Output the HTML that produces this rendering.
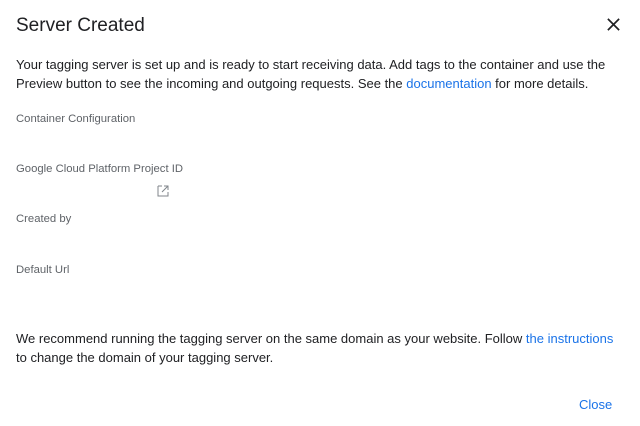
<!DOCTYPE html>
<html><head><style>
body{margin:0;width:640px;height:426px;background:#fff;font-family:"Liberation Sans",Arial,sans-serif;position:relative;overflow:hidden;color:#202124}
.a{position:absolute;white-space:nowrap}
h1{position:absolute;left:16px;top:15px;margin:0;font-size:19px;font-weight:normal;color:#202124}
.p{font-size:13px;line-height:19px;color:#202124}
.l{font-size:11.3px;color:#5f6368}
a{color:#1a73e8;text-decoration:none}
</style></head><body>
<h1>Server Created</h1>
<svg class="a" style="left:606px;top:17px" width="15" height="15" viewBox="0 0 16 16"><path d="M2 2L14 14M14 2L2 14" stroke="#202124" stroke-width="1.8"/></svg>
<div class="a p" style="left:16px;top:55px">Your tagging server is set up and is ready to start receiving data. Add tags to the container and use the<br>Preview button to see the incoming and outgoing requests. See the <a>documentation</a> for more details.</div>
<div class="a l" style="left:16px;top:113px">Container Configuration</div>
<div class="a l" style="left:16px;top:163px">Google Cloud Platform Project ID</div>
<svg class="a" style="left:157px;top:185px" width="12" height="12" viewBox="0 0 12 12"><path d="M1 1H5M1 1V11H11V7M7 1H11V5M11 1L5 7" stroke="#80868b" fill="none" stroke-width="1"/></svg>
<div class="a l" style="left:16px;top:213px">Created by</div>
<div class="a l" style="left:16px;top:264px">Default Url</div>
<div class="a p" style="left:16px;top:329px">We recommend running the tagging server on the same domain as your website. Follow <a>the instructions</a><br>to change the domain of your tagging server.</div>
<div class="a" style="left:579px;top:397px;font-size:13px;color:#1a73e8">Close</div>
</body></html>
